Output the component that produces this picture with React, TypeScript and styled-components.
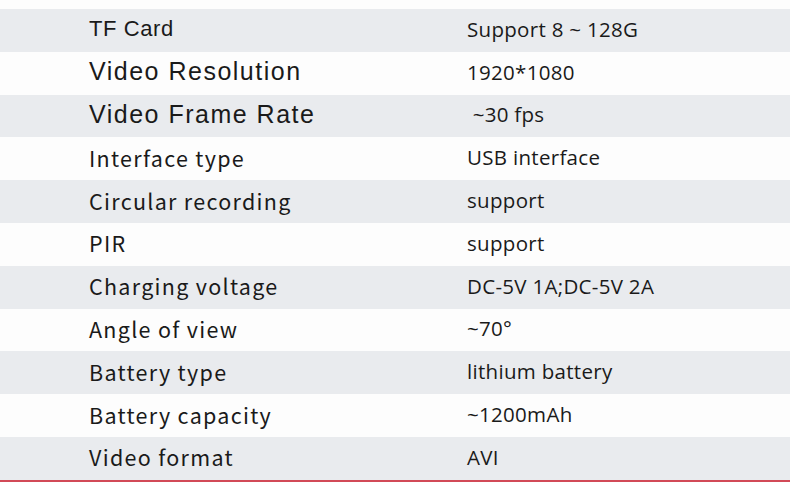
import { createGlobalStyle, styled } from "styled-components";

const GlobalStyle = createGlobalStyle`
    html, body {
        margin: 0;
        padding: 0;
        background: #fdfdfd;
    }
`;

type Spec = { label: string; value: string; big?: boolean; arial?: boolean };

const specs: Spec[] = [
    { label: "TF Card", value: "Support 8 ~ 128G", arial: true },
    { label: "Video Resolution", value: "1920*1080", arial: true, big: true },
    { label: "Video Frame Rate", value: "\u00a0~30 fps", arial: true, big: true },
    { label: "Interface type", value: "USB interface" },
    { label: "Circular recording", value: "support" },
    { label: "PIR", value: "support" },
    { label: "Charging voltage", value: "DC-5V 1A;DC-5V 2A" },
    { label: "Angle of view", value: "~70\u00b0" },
    { label: "Battery type", value: "lithium battery" },
    { label: "Battery capacity", value: "~1200mAh" },
    { label: "Video format", value: "AVI" },
];

export default function App() {
    return (
        <>
            <GlobalStyle />
            <SpecTable>
                {specs.map((s, i) => (
                    <Row key={s.label} $shaded={i % 2 === 0}>
                        <Label $arial={s.arial} $big={s.big}>{s.label}</Label>
                        <Value>{s.value}</Value>
                    </Row>
                ))}
            </SpecTable>
        </>
    );
}

const SpecTable = styled.div`
    width: 790px;
    height: 482px;
    box-sizing: border-box;
    padding-top: 9px;
    display: grid;
    grid-template-rows: repeat(11, 42.8px);
    background: #fdfdfd;
    border-bottom: 2px solid #d24a57;
    overflow: hidden;
`;

const Row = styled.div<{ $shaded: boolean }>`
    display: grid;
    grid-template-columns: 378px 1fr;
    align-items: center;
    padding-left: 89px;
    padding-bottom: 3px;
    box-sizing: border-box;
    background: ${(p) => (p.$shaded ? "#e9ebee" : "#fdfdfd")};
    color: #1a1a1a;
`;

const Label = styled.div<{ $arial?: boolean; $big?: boolean }>`
    font-family: ${(p) => (p.$arial ? '"Liberation Sans", Arial, sans-serif' : '"Noto Sans CJK SC", "Noto Sans", sans-serif')};
    font-size: ${(p) => (p.$big ? "25px" : p.$arial ? "22px" : "21.5px")};
    letter-spacing: ${(p) => (p.$big ? "1.5px" : p.$arial ? "0.6px" : "1.3px")};
    white-space: nowrap;
`;

const Value = styled.div`
    font-family: "Open Sans", "Noto Sans", sans-serif;
    font-size: 20.5px;
    letter-spacing: 0.3px;
    white-space: nowrap;
`;
